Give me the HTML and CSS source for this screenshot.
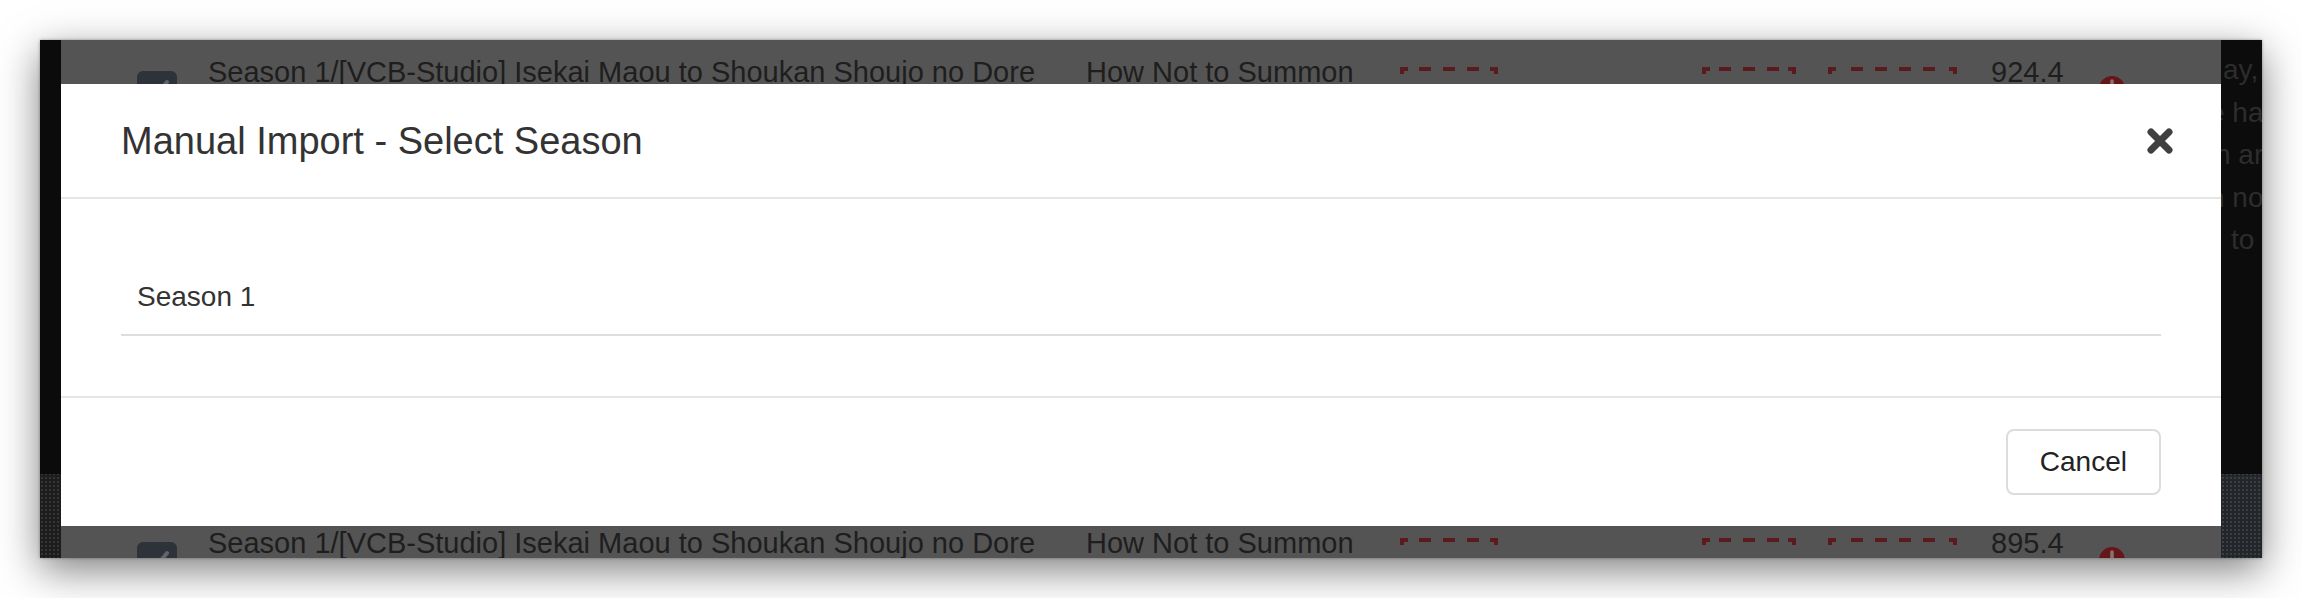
FILE: index.html
```html
<!DOCTYPE html>
<html lang="en">
<head>
<meta charset="utf-8">
<title>Manual Import - Select Season</title>
<link rel="stylesheet" href="styles.css">
</head>
<body>
<div class="window">
  <div class="app">
    <aside class="rail"></aside>
    <main class="table">
      <div class="row">
        <span class="check"><svg width="40" height="40" viewBox="0 0 40 40"><path d="M11 21 L17 27 L30 11" fill="none" stroke="#60646b" stroke-width="4" stroke-linecap="round" stroke-linejoin="round"/></svg></span>
        <span class="cell">Season 1/[VCB-Studio] Isekai Maou to Shoukan Shoujo no Dore</span>
        <span class="cell">How Not to Summon</span>
        <span class="tag tag-a"></span>
        <span class="tag tag-b"></span>
        <span class="tag tag-c"></span>
        <span class="cell">924.4</span>
        <span class="status"><svg width="26" height="26" viewBox="0 0 26 26"><circle cx="13" cy="13" r="13" fill="#651619"/><path d="M13 5 V15 M13 19 V21" stroke="#8a7273" stroke-width="3.5" stroke-linecap="round"/></svg></span>
      </div>
      <div class="rows-hidden"></div>
      <div class="row">
        <span class="check"><svg width="40" height="40" viewBox="0 0 40 40"><path d="M11 21 L17 27 L30 11" fill="none" stroke="#60646b" stroke-width="4" stroke-linecap="round" stroke-linejoin="round"/></svg></span>
        <span class="cell">Season 1/[VCB-Studio] Isekai Maou to Shoukan Shoujo no Dore</span>
        <span class="cell">How Not to Summon</span>
        <span class="tag tag-a"></span>
        <span class="tag tag-b"></span>
        <span class="tag tag-c"></span>
        <span class="cell">895.4</span>
        <span class="status"><svg width="26" height="26" viewBox="0 0 26 26"><circle cx="13" cy="13" r="13" fill="#651619"/><path d="M13 5 V15 M13 19 V21" stroke="#8a7273" stroke-width="3.5" stroke-linecap="round"/></svg></span>
      </div>
    </main>
    <aside class="side">
      <div class="popover">
        <div class="pl pl1">ay,</div>
        <div class="pl pl2">e ha</div>
        <div class="pl pl3">n ar</div>
        <div class="pl pl4">n no</div>
        <div class="pl pl5">to</div>
      </div>
    </aside>
  </div>

  <div class="modal">
    <header class="modal-header">
      <h2 class="modal-title">Manual Import - Select Season</h2>
      <button class="close" aria-label="Close">
        <svg width="26" height="26" viewBox="0 0 26 26"><path d="M4 4 L22 22 M22 4 L4 22" stroke="#404040" stroke-width="7" stroke-linecap="round"/></svg>
      </button>
    </header>
    <div class="modal-body">
      <div class="season-row">Season 1</div>
    </div>
    <footer class="modal-footer">
      <button class="btn">Cancel</button>
    </footer>
  </div>
</div>
</body>
</html>
```

FILE: styles.css
```css
html, body {
  margin: 0;
  padding: 0;
  background: #ffffff;
}

body {
  width: 2302px;
  height: 598px;
  overflow: hidden;
  font-family: "Liberation Sans", Arial, sans-serif;
}

.window {
  position: relative;
  margin: 40px 0 0 40px;
  width: 2222px;
  height: 518px;
  overflow: hidden;
  box-shadow: 0 12px 38px rgba(0, 0, 0, 0.5), 0 0 3px rgba(0, 0, 0, 0.35);
}

.app {
  display: flex;
  height: 100%;
}

.rail {
  flex: none;
  width: 21px;
  background:
    linear-gradient(#0b0b0b, #0b0b0b) top left / 100% 434px no-repeat,
    radial-gradient(circle, #353535 0.9px, transparent 1.3px) 0 0 / 4px 4px,
    #1d1d1d;
}

.table {
  flex: none;
  width: 2160px;
  background: #545454;
  padding-top: 12px;
  display: flex;
  flex-direction: column;
}

.row {
  flex: none;
  height: 94.2px;
  display: grid;
  grid-template-columns: 76px 71px 878px 314px 302px 126px 163px 108px 1fr;
  align-items: start;
  font-size: 29px;
  line-height: 40px;
  color: #1e1e1e;
}

.row::before {
  content: "";
}

/* the rows that sit behind the modal */
.rows-hidden {
  flex: none;
  height: 376.8px;
}

.check {
  margin-top: 19px;
  width: 40px;
  height: 40px;
  border-radius: 6px;
  background: #2e3239;
  display: flex;
}

.cell {
  white-space: nowrap;
  overflow: hidden;
}

.tag {
  --c: #5a1a1e;
  margin-top: 15px;
  height: 46px;
  background:
    linear-gradient(var(--c), var(--c)) left top / 8px 4px no-repeat,
    linear-gradient(var(--c), var(--c)) left top / 4px 7px no-repeat,
    linear-gradient(var(--c), var(--c)) right top / 8px 4px no-repeat,
    linear-gradient(var(--c), var(--c)) right top / 4px 7px no-repeat,
    repeating-linear-gradient(90deg, var(--c) 0 12px, transparent 12px 24px) center top / var(--span) 4px no-repeat;
}

.tag-a { width: 98px; --span: 60px; }
.tag-b { width: 94px; --span: 60px; }
.tag-c { width: 129px; --span: 84px; }

.status {
  margin-top: 24px;
  width: 26px;
  height: 26px;
  display: flex;
}

.side {
  flex: none;
  width: 41px;
  display: flex;
  flex-direction: column;
  background:
    radial-gradient(circle, #3a3f44 0.9px, transparent 1.3px) 0 0 / 4px 4px,
    #22262a;
}

.popover {
  flex: none;
  height: 434px;
  background: #0b0c0b;
  overflow: hidden;
  padding-top: 9px;
  box-sizing: border-box;
  font-size: 28px;
  line-height: 42.5px;
  color: #2d2d2d;
  white-space: nowrap;
}

.pl1 { margin-left: 2px; }
.pl2 { margin-left: -12px; }
.pl3 { margin-left: -6px; }
.pl4 { margin-left: -12px; }
.pl5 { margin-left: 10px; }

.modal {
  position: absolute;
  left: 21px;
  top: 44px;
  width: 2160px;
  height: 442px;
  background: #ffffff;
  display: flex;
  flex-direction: column;
}

.modal-header {
  display: flex;
  align-items: center;
  justify-content: space-between;
  padding: 30px 48px 29px 60px;
  border-bottom: 2px solid #e5e5e5;
}

.modal-title {
  margin: 0;
  font-size: 38px;
  line-height: 54px;
  font-weight: normal;
  color: #333333;
}

.close {
  border: 0;
  padding: 0;
  background: none;
  width: 26px;
  height: 26px;
  display: flex;
}

.modal-body {
  padding: 60px 60px;
}

.season-row {
  height: 75px;
  padding-left: 16px;
  font-size: 28px;
  line-height: 75px;
  color: #333333;
  border-bottom: 2px solid #dddddd;
}

.modal-footer {
  display: flex;
  justify-content: flex-end;
  padding: 31px 60px;
  border-top: 2px solid #e5e5e5;
}

.btn {
  height: 66px;
  padding: 0 32px;
  border: 2px solid #dcdcdc;
  border-radius: 8px;
  background: #ffffff;
  font-family: "Liberation Sans", Arial, sans-serif;
  font-size: 28px;
  line-height: 62px;
  color: #222222;
}
```
